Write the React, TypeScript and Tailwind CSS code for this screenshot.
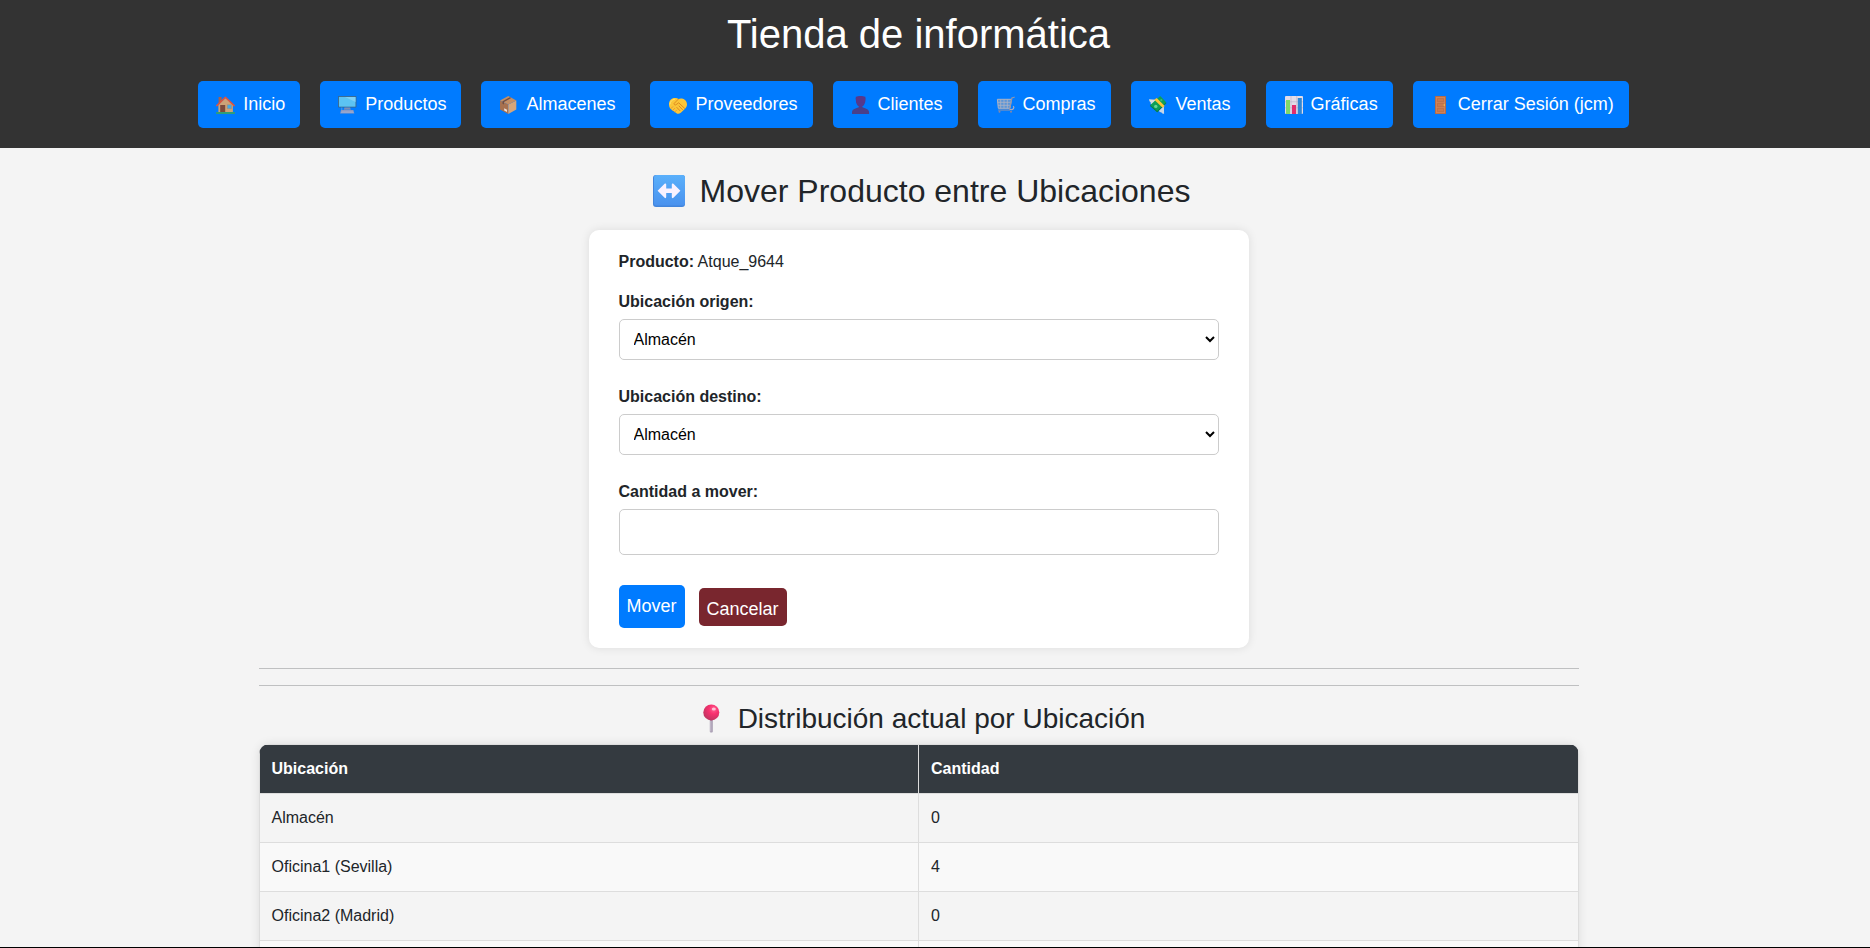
import type { ReactNode } from "react";

function Glyph({ children }: { children: ReactNode }) {
  return (
    <svg width="25" height="20" viewBox="0 0 25 20" aria-hidden="true" className="shrink-0">
      {children}
    </svg>
  );
}

const HomeIcon = () => (
  <Glyph>
    <rect x="5.6" y="2" width="3" height="6" fill="#a9614c" />
    <path d="M5.4 10 12.5 3l7.4 7v7.5H5.4Z" fill="#cda277" />
    <path d="M3.8 10.6 12.4 2.2l8.8 8.400" fill="none" stroke="#e0533f" strokeWidth="1.5" strokeLinejoin="round" strokeLinecap="round" />
    <rect x="7.2" y="10" width="5" height="7.5" fill="#7c4a3c" />
    <rect x="14.2" y="9.8" width="4.4" height="4" fill="#3fa9e8" stroke="#b58a66" strokeWidth=".5" />
    <rect x="3" y="17" width="19" height="2" rx=".8" fill="#2f9e78" />
  </Glyph>
);

const ComputerIcon = () => (
  <Glyph>
    <rect x="3" y="1" width="18.4" height="11.6" rx=".8" fill="#3a6488" />
    <rect x="3.9" y="1.9" width="16.6" height="9.8" fill="#5cc3f3" />
    <path d="M10 1.9h10.5v5Z" fill="#7fd0f6" />
    <path d="M9.5 12.6h5.6l.8 2.2H8.7Z" fill="#7d8eb5" />
    <path d="M6.8 12.5v2.5" stroke="#4f9fe0" strokeWidth="1" />
    <path d="M6 15h12.4l.9 3.6H5.1Z" fill="#8797c2" />
    <path d="M6.4 16.3h11.8M6 17.5h12.6" stroke="#a5b0d3" strokeWidth=".6" />
  </Glyph>
);

const PackageIcon = () => (
  <Glyph>
    <path d="m4 5.6 8.3 3.9V19L4 14.6Z" fill="#a8714f" />
    <path d="m20.3 5.6-8 3.9V19l8-4.4Z" fill="#d6a67b" />
    <path d="m12.3 1 8 4.6-8 3.9L4 5.6Z" fill="#c58f65" />
    <path d="m13.800 2.200 1.400.8-7.200 3.900v2.600l-1.500-.8V6.200Z" fill="#6f4f46" />
    <path d="m8.2 13.3 2.8 1.4v2.2l-2.8-1.4Z" fill="#f1dfd4" />
  </Glyph>
);

const HandshakeIcon = () => (
  <Glyph>
    <path d="M4 9.5C4 5 7 2.8 10.2 3.1c1.4 0 2.3.5 3.2.9 3-1.4 8.6.1 8.6 5.6 0 2-1 3.2-2.2 4.5l-4 3.6c-1.3 1.2-3 1.6-4.3.6L6 14.2c-1.2-1-2-2.6-2-4.7Z" fill="#fbc638" />
    <path d="m13.2 4.3-4 4.1c-.7.9.8 2.2 2 1.2l2.5-1.8 6 5.6M14 11l3.5 3.6M11.8 12.4l3.3 3.4" fill="none" stroke="#d9831f" strokeWidth=".9" strokeLinecap="round" />
    <path d="m6 13.5 1.8-1.8M7.700 15.4l2-2M9.7 17l1.9-1.9" stroke="#e5962c" strokeWidth=".9" strokeLinecap="round" />
    <path d="M5 9c.3-2.6 2-4.5 4.5-4.7" fill="none" stroke="#ffe36e" strokeWidth="1" strokeLinecap="round" />
  </Glyph>
);

const PersonIcon = () => (
  <Glyph>
    <path d="M7.8 1.8h9.6l-.3 5.2c-.2 2.2-1.800 4.2-3 4.7v1.5h-3v-1.5c-1.3-.5-2.800-2.5-3-4.7Z" fill="#533a8e" />
    <path d="M7.8 4.5C7.3 2 9 1 12.5 1s5.3 1 4.9 3.5l-.3 3H8.1Z" fill="#59388a" />
    <path d="M11 12h3.2c1.5 1.2 6.9 1.5 6.9 5.2V19H4v-1.8C4 13.5 9.5 13.2 11 12Z" fill="#49408a" />
  </Glyph>
);

const CartIcon = () => (
  <Glyph>
    <path d="M4.4 4.3h14.2l-1.7 9H5.3Z" fill="#5b96d8" stroke="#aeb3c4" strokeWidth="1" />
    <path d="M7.7 4.3v9M11 4.3v9M14.3 4.3v9M4.6 7.3h13.2M5 10.3h12.6" stroke="#aeb3c4" strokeWidth=".8" />
    <path d="m21.2 2.2-2.3.7-2.4 12.1H5.6" fill="none" stroke="#9396ab" strokeWidth="1.2" strokeLinecap="round" />
    <path d="M17 14.5c3.6.6 4.6-1.8 3.2-3.3" fill="none" stroke="#a9abc0" strokeWidth="1.2" />
    <circle cx="6.5" cy="16.8" r="1" fill="#8887a3" />
    <circle cx="18" cy="16.8" r="1" fill="#8887a3" />
  </Glyph>
);

const MoneyIcon = () => (
  <Glyph>
    <path d="m3 4.2 6.8.6-3.5 5.4c-.8-1-2.300-1.600-1.600-3C3.600 7 3.400 5.400 3 4.200Z" fill="#d8dde2" />
    <path d="m17.9 11 .2 7.700c-1.500.1-2.400-.7-2.900-1.500-1.500.3-2-.7-2.200-1.700Z" fill="#c7d6e6" />
    <path d="m14.200 1 6 6.200-9 10L4.300 10Z" fill="#0f9f57" />
    <path d="m4.300 10 7 6 8.900-8.800v1.200l-9 8.900L4 11Z" fill="#087a47" />
    <path d="m8.300 4.700 2.400-1.600 8 8-2.100 1.700Z" fill="#ffc637" />
    <circle cx="9.8" cy="11.4" r="1.7" fill="#66d696" />
    <circle cx="15.3" cy="5.2" r="1.1" fill="#38bb74" />
  </Glyph>
);

const ChartIcon = () => (
  <Glyph>
    <rect x="4" y="1" width="18" height="18" rx="1" fill="#e2dce8" />
    <path d="M10 1v18M15.8 1v18M4 6.8h18M4 12.8h18" stroke="#beb6cd" strokeWidth=".7" />
    <rect x="5" y="5" width="4" height="14" fill="#7fd968" />
    <rect x="11" y="10" width="4" height="9" fill="#e22d6d" />
    <rect x="16.8" y="3" width="4" height="16" fill="#3087d3" />
  </Glyph>
);

const DoorIcon = () => (
  <Glyph>
    <rect x="7" y="1" width="11" height="18" rx=".6" fill="#b46c49" />
    <rect x="8" y="2" width="9" height="16.2" fill="#d08459" />
    <path d="M9.4 3.6h6.2v3H9.4ZM9.4 8.4h6.2v3.2H9.4ZM9.4 13.4h6.2v3.2H9.4Z" fill="#c87a50" stroke="#b36843" strokeWidth=".6" />
    <circle cx="16.2" cy="10" r=".8" fill="#ffd04f" />
  </Glyph>
);

const links: { label: string; icon: ReactNode }[] = [
  { label: "Inicio", icon: <HomeIcon /> },
  { label: "Productos", icon: <ComputerIcon /> },
  { label: "Almacenes", icon: <PackageIcon /> },
  { label: "Proveedores", icon: <HandshakeIcon /> },
  { label: "Clientes", icon: <PersonIcon /> },
  { label: "Compras", icon: <CartIcon /> },
  { label: "Ventas", icon: <MoneyIcon /> },
  { label: "Gráficas", icon: <ChartIcon /> },
  { label: "Cerrar Sesión (jcm)", icon: <DoorIcon /> },
];

const places = ["Almacén", "Oficina1 (Sevilla)", "Oficina2 (Madrid)"];

const rows = [
  { place: places[0], amount: "0" },
  { place: places[1], amount: "4" },
  { place: places[2], amount: "0" },
  { place: "", amount: "" },
];

function PlaceSelect({ id, label }: { id: string; label: string }) {
  return (
    <div className="mb-[25px]">
      <label htmlFor={id} className="mb-[5px] block font-bold">
        {label}
      </label>
      <select id={id} className="block h-[41px] w-full rounded-[5px] border border-[#ccc] bg-white px-[10px] text-base text-black">
        {places.map((p) => (
          <option key={p}>{p}</option>
        ))}
      </select>
    </div>
  );
}

export default function App() {
  return (
    <div className="h-screen overflow-hidden border-b border-black bg-[#f4f4f4] font-['Liberation_Sans',Arial,sans-serif] text-base leading-6 text-[#212529]">
      <header className="bg-[#333] pt-[10px] pr-[33px] pb-5 text-white">
        <h1 className="mb-[23px] text-center text-[40px] leading-[48px]">Tienda de informática</h1>
        <nav className="flex flex-wrap justify-center gap-5 pr-[10px]">
          {links.map(({ label, icon }) => (
            <a key={label} href="#" className="flex items-center gap-[5px] rounded-[5px] bg-[#007bff] px-[15px] py-[10px] text-lg leading-[27px] whitespace-nowrap">
              {icon}
              {label}
            </a>
          ))}
        </nav>
      </header>

      <main className="pr-[33px]">
        <div className="mx-auto max-w-[1320px]">
          <h2 className="mt-6 mb-5 flex items-center justify-center gap-[9px] text-[32px] leading-[38px]">
            <svg width="44" height="32" viewBox="0 0 44 32" aria-hidden="true">
              <defs>
                <linearGradient id="tile" x1="0" y1="0" x2="0" y2="1">
                  <stop offset="0" stopColor="#5ab0fb" />
                  <stop offset="1" stopColor="#4a92ee" />
                </linearGradient>
              </defs>
              <rect x="6" y="0" width="32" height="32" rx="3" fill="#4285dc" />
              <rect x="7" y="0" width="31" height="30.5" rx="2.5" fill="url(#tile)" />
              <path d="m10.600 15.800 7-7c.9-.7 1.600-.3 1.600.8v3.800h5.600V9.600c0-1.100.8-1.500 1.600-.8l7 7-7 7c-.8.700-1.600.3-1.600-.8v-3.900h-5.600V22c0 1.100-.7 1.500-1.600.8Z" fill="#faf2ff" />
            </svg>
            Mover Producto entre Ubicaciones
          </h2>

          <form className="mx-auto max-w-[660px] rounded-[10px] bg-white px-[30px] py-5 shadow-[0_0_10px_rgba(0,0,0,0.1)]" onSubmit={(e) => e.preventDefault()}>
            <p className="mb-4">
              <strong>Producto:</strong> Atque_9644
            </p>
            <PlaceSelect id="origen" label="Ubicación origen:" />
            <PlaceSelect id="destino" label="Ubicación destino:" />
            <label htmlFor="cantidad" className="mb-[5px] block font-bold">
              Cantidad a mover:
            </label>
            <input id="cantidad" type="number" className="mb-[30px] block h-[46px] w-full rounded-[5px] border border-[#ccc] bg-white px-[10px]" />
            <div className="flex items-center gap-[14px] text-lg leading-[27px] text-white">
              <button type="submit" className="rounded-[5px] bg-[#007bff] p-2">
                Mover
              </button>
              <a href="#" className="rounded-[5px] bg-[#79262e] px-2 pt-2 pb-[3px]">
                Cancelar
              </a>
            </div>
          </form>

          <hr className="mt-5 mb-4 border-[#bfc0c1]" />
          <hr className="mb-4 border-[#bfc0c1]" />

          <h3 className="mb-2 flex items-center justify-center gap-2 text-[28px] leading-[34px]">
            <svg width="38" height="30" viewBox="0 0 38 30" aria-hidden="true">
              <defs>
                <radialGradient id="pin" cx=".65" cy=".3" r=".75">
                  <stop offset="0" stopColor="#ff6292" />
                  <stop offset=".4" stopColor="#f8316f" />
                  <stop offset="1" stopColor="#bd3560" />
                </radialGradient>
              </defs>
              <rect x="17.8" y="14" width="3" height="14.5" rx="1" fill="#a89db2" />
              <rect x="18.3" y="17" width="1" height="10.5" fill="#c9c1d0" />
              <circle cx="19.3" cy="8.4" r="8" fill="url(#pin)" />
              <ellipse cx="21.8" cy="5" rx="2" ry="1.6" fill="#ffc2d6" />
            </svg>
            Distribución actual por Ubicación
          </h3>

          <div className="overflow-hidden rounded-[10px] shadow-[0_0_10px_rgba(0,0,0,0.1)]">
            <table className="w-full table-fixed border-collapse text-left">
              <thead>
                <tr className="bg-[#343a40] text-white">
                  <th className="border border-[#ddd] p-3">Ubicación</th>
                  <th className="border border-[#ddd] p-3">Cantidad</th>
                </tr>
              </thead>
              <tbody>
                {rows.map((r, i) => (
                  <tr key={i} className="h-[49px] even:bg-[#f9f9f9]">
                    <td className="border border-[#ddd] p-3">{r.place}</td>
                    <td className="border border-[#ddd] p-3">{r.amount}</td>
                  </tr>
                ))}
              </tbody>
            </table>
          </div>
        </div>
      </main>
    </div>
  );
}
